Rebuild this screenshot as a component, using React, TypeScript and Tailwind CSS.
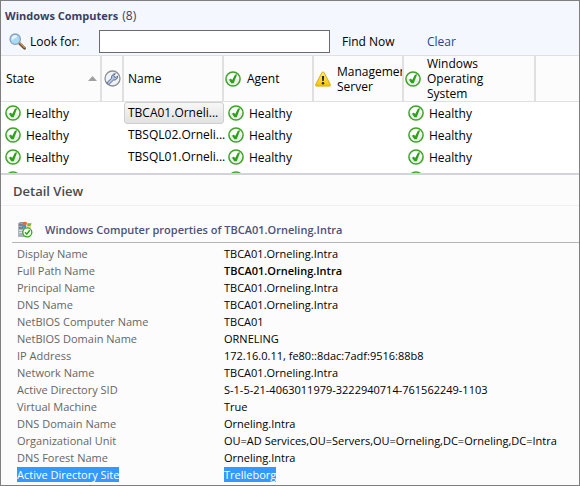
import { useState } from "react";

const computers = ["TBCA01.Orneli...", "TBSQL02.Orneli...", "TBSQL01.Orneli..."];

const properties: { label: string; value: string; bold?: boolean; selected?: boolean }[] = [
  { label: "Display Name", value: "TBCA01.Orneling.Intra" },
  { label: "Full Path Name", value: "TBCA01.Orneling.Intra", bold: true },
  { label: "Principal Name", value: "TBCA01.Orneling.Intra" },
  { label: "DNS Name", value: "TBCA01.Orneling.Intra" },
  { label: "NetBIOS Computer Name", value: "TBCA01" },
  { label: "NetBIOS Domain Name", value: "ORNELING" },
  { label: "IP Address", value: "172.16.0.11, fe80::8dac:7adf:9516:88b8" },
  { label: "Network Name", value: "TBCA01.Orneling.Intra" },
  { label: "Active Directory SID", value: "S-1-5-21-4063011979-3222940714-761562249-1103" },
  { label: "Virtual Machine", value: "True" },
  { label: "DNS Domain Name", value: "Orneling.Intra" },
  { label: "Organizational Unit", value: "OU=AD Services,OU=Servers,OU=Orneling,DC=Orneling,DC=Intra" },
  { label: "DNS Forest Name", value: "Orneling.Intra" },
  { label: "Active Directory Site", value: "Trelleborg", selected: true },
];

function CheckIcon() {
  return (
    <svg width="16" height="16" viewBox="0 0 16 16" className="shrink-0" aria-hidden="true">
      <circle cx="8" cy="8" r="7.1" fill="#ebeeeb" stroke="#3da526" strokeWidth="1.5" />
      <path d="M2.2 8a5.8 5.8 0 0 1 11.6 0Z" fill="#fff" />
      <path d="M4 8.700 6 7.600l1.100 1.700L9.900 3.800l2.300-.5L8.700 12.200H6.300Z" fill="#2fa01b" />
    </svg>
  );
}

function WarningIcon() {
  return (
    <svg width="16" height="16" viewBox="0 0 16 16" className="shrink-0" aria-hidden="true">
      <defs>
        <linearGradient id="warn" x1="0" y1="0" x2="0" y2="1">
          <stop offset="0" stopColor="#fff07a" />
          <stop offset="1" stopColor="#f5c400" />
        </linearGradient>
      </defs>
      <path d="M8 .9c.5 0 .9.3 1.100.7l6.200 11.900c.4.8-.1 1.600-1 1.600H1.700c-.9 0-1.400-.8-1-1.600L6.900 1.600C7.100 1.200 7.500.9 8 .9Z" fill="url(#warn)" stroke="#d3a20b" strokeWidth=".9" />
      <path d="M6.900 5h2.200l-.4 5H7.300Z" fill="#222" />
      <circle cx="8" cy="12.200" r="1.200" fill="#222" />
    </svg>
  );
}

function WrenchIcon() {
  return (
    <svg width="17" height="17" viewBox="0 0 17 17" className="shrink-0" aria-label="Maintenance mode" role="img">
      <circle cx="8.500" cy="8.500" r="7.500" fill="#f2f3f5" stroke="#8d9096" strokeWidth="1.300" />
      <path
        d="M3.300 12.200 7.600 8.300C7.100 6 8.600 3.800 11.300 3.700L9.900 5.500l.5 1.600 1.700.3 1.500-1.500c.3 2.600-1.600 4.400-4.200 4.200L5.400 14c-1.200.8-3-.6-2.100-1.800Z"
        fill="#b3c5e2"
        stroke="#56698f"
        strokeWidth="1"
        strokeLinejoin="round"
      />
    </svg>
  );
}

function SearchIcon() {
  return (
    <svg width="17" height="17" viewBox="0 0 17 17" className="shrink-0" aria-hidden="true">
      <path d="m9.800 9.800 5.700 5.400" stroke="#6b5033" strokeWidth="2.800" strokeLinecap="round" />
      <path d="m10.200 9.400 5.200 5" stroke="#d69a58" strokeWidth="1.200" strokeLinecap="round" />
      <circle cx="6.200" cy="6.200" r="5.200" fill="#a9daf7" stroke="#8ba0b8" strokeWidth="1.300" />
      <path d="M2.500 6.300C2.400 3.700 4.600 2 7 2.400c2 .3 1.300 1.700-.5 2.300-1.700.5-2 2.600-4 1.600Z" fill="#e6f6ff" />
    </svg>
  );
}

function ServerIcon() {
  return (
    <svg width="16" height="17" viewBox="0 0 16 17" className="shrink-0" aria-hidden="true">
      <path d="M1 2.500 3 1h6v14.500H1Z" fill="#8c969e" />
      <path d="M1 2.500h6v13.500H1Z" fill="#aab4ba" />
      <path d="M2 4h4.500M2 7h4.500" stroke="#46525c" strokeWidth="1.200" />
      <path d="M2 9.500h4M2 11.500h3" stroke="#dce2e5" />
      <path d="M6 1.500q2-1.500 4 0L9.500 4q-2-1-4 0Z" fill="#ee6532" />
      <path d="M10.500 1.700q2 1.200 4 0L14 4.600q-2 1-4 0Z" fill="#79b843" />
      <path d="M5.400 4.500q2-1 4 0L9 7q-2-1-4 0Z" fill="#3f96d4" />
      <path d="M9.900 5q2 1 4 0l-.5 2.500q-2 1-4 0Z" fill="#f5bf2e" />
      <circle cx="10.300" cy="11.300" r="4.500" fill="#fff" stroke="#3da526" strokeWidth="1.300" />
      <path d="m8 11.300 1.800 1.900 3-4" fill="none" stroke="#2fa01b" strokeWidth="1.500" />
    </svg>
  );
}

function StateCell({ label }: { label?: string }) {
  return (
    <div className="flex h-[22px] items-center gap-[5px] pl-1">
      <CheckIcon />
      {label}
    </div>
  );
}

const headCell = "h-[46px] border-r-2 border-b border-[#e0e0e0] p-0 text-left align-middle font-normal";

export default function App() {
  const [query, setQuery] = useState("");
  return (
    <main className="border border-[#7f7f7f] bg-[#fcfcfc] font-['Open_Sans','Noto_Sans',sans-serif] text-xs leading-[15px] text-black">
      <header className="bg-[#f4f7fd]">
        <h1 className="flex gap-1 px-1 pt-[7px] leading-[15px] text-[#3b3d63]">
          <span className="text-[11px] font-bold">Windows Computers</span>
          <span>(8)</span>
        </h1>
        <form className="flex h-8 items-center pt-1 pl-2" onSubmit={(e) => e.preventDefault()}>
          <label htmlFor="look-for" className="flex w-[90px] items-center gap-1">
            <SearchIcon />
            Look for:
          </label>
          <input
            id="look-for"
            type="text"
            value={query}
            onChange={(e) => setQuery(e.target.value)}
            className="h-[23px] w-[231px] border border-[#6b6b6b] bg-white px-1 outline-none"
          />
          <button type="submit" className="ml-3 w-[85px] text-left">Find Now</button>
          <button type="button" className="text-[#1f4690]" onClick={() => setQuery("")}>Clear</button>
        </form>
      </header>

      <section className="h-[120px] overflow-hidden border-t border-b-2 border-t-[#e0e0e0] border-b-[#d3d3db] bg-white">
        <table className="w-full table-fixed border-separate border-spacing-0">
          <colgroup>
            <col className="w-[101px]" />
            <col className="w-[22px]" />
            <col className="w-[100px]" />
            <col className="w-[90px]" />
            <col className="w-[90px]" />
            <col className="w-[132px]" />
            <col />
          </colgroup>
          <thead className="bg-[#fcfcfc]">
            <tr>
              <th scope="col" className={headCell}>
                <div className="flex items-center justify-between pr-[3px] pl-[5px]">
                  State
                  <svg width="9" height="5" viewBox="0 0 9 5" aria-hidden="true"><path d="M4.500 0 9 5H0Z" fill="#a0a0a0" /></svg>
                </div>
              </th>
              <th scope="col" className={headCell}><div className="flex justify-center"><WrenchIcon /></div></th>
              <th scope="col" className={headCell}><div className="pl-1">Name</div></th>
              <th scope="col" className={headCell}><div className="flex items-center gap-1.5 pl-px"><CheckIcon />Agent</div></th>
              <th scope="col" className={headCell}>
                <div className="flex items-center gap-1.5 overflow-hidden pl-px"><WarningIcon />Management Server</div>
              </th>
              <th scope="col" className={headCell}>
                <div className="flex items-center gap-1.5 pl-px"><CheckIcon /><span className="w-20">Windows Operating System</span></div>
              </th>
              <td className="border-b border-[#e0e0e0]" />
            </tr>
          </thead>
          <tbody>
            {computers.map((name, i) => (
              <tr key={name}>
                <td className="p-0"><StateCell label="Healthy" /></td>
                <td />
                <td className="p-0">
                  <div className={i === 0 ? "h-[22px] rounded-[3px] border border-[#cfcfcf] bg-linear-to-b from-[#f7f7f7] to-[#e2e2e2] pl-[3px] leading-5 whitespace-nowrap" : "h-[22px] pl-1 leading-[22px] whitespace-nowrap"}>
                    {name}
                  </div>
                </td>
                <td className="p-0"><StateCell label="Healthy" /></td>
                <td />
                <td className="p-0"><StateCell label="Healthy" /></td>
                <td />
              </tr>
            ))}
            <tr>
              <td className="p-0"><StateCell /></td>
              <td />
              <td />
              <td className="p-0"><StateCell /></td>
              <td />
              <td className="p-0"><StateCell /></td>
              <td />
            </tr>
          </tbody>
        </table>
      </section>

      <section>
        <h2 className="h-[31px] border-b border-[#f0f0f0] pl-3 text-[13px] leading-8 font-semibold text-[#4a4a4a]">Detail View</h2>
        <div className="pt-[11px] pb-[2px] pl-[11px]">
          <h3 className="flex h-[26px] items-center gap-3 border-b border-[#b5b5b5] pl-[5px] text-[11px] font-semibold text-[#4f5078]">
            <ServerIcon />
            Windows Computer properties of TBCA01.Orneling.Intra
          </h3>
          <table className="mt-[2px] w-full table-fixed border-collapse text-[11px] leading-[13px]">
            <tbody>
              {properties.map(({ label, value, bold, selected }) => (
                <tr key={label} className="h-[17px]">
                  <th scope="row" className="w-[212px] p-0 pl-[5px] text-left align-middle font-normal whitespace-nowrap text-[#666]">
                    <span className={selected ? "bg-[#3399ff] text-white" : ""}>{label}</span>
                  </th>
                  <td className="p-0 align-middle whitespace-nowrap">
                    <span className={selected ? "bg-[#3399ff] text-white" : bold ? "font-semibold" : ""}>{value}</span>
                  </td>
                </tr>
              ))}
            </tbody>
          </table>
        </div>
      </section>
    </main>
  );
}
